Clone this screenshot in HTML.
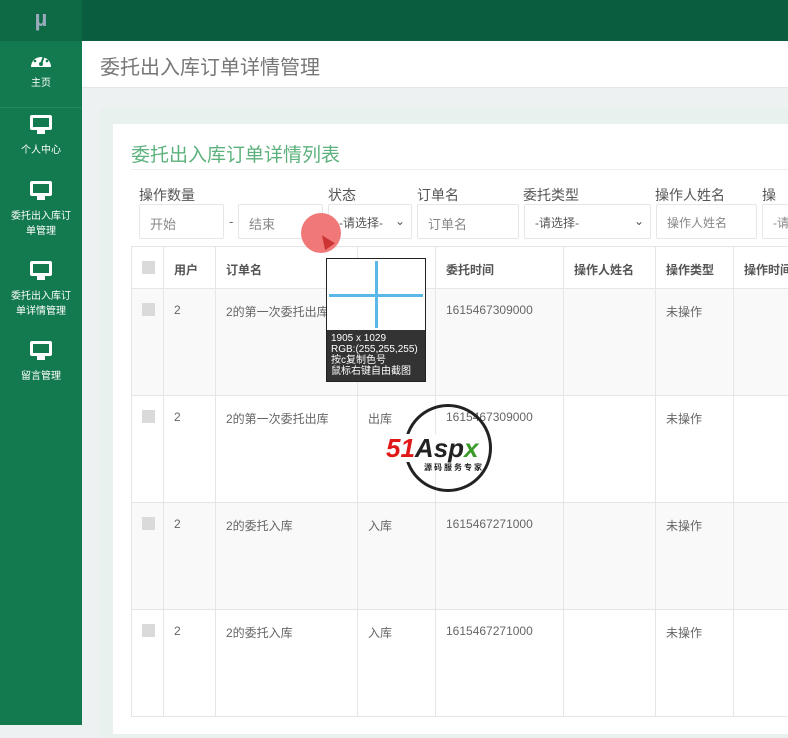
<!DOCTYPE html>
<html><head><meta charset="utf-8"><style>
*{margin:0;padding:0;box-sizing:border-box}
body{width:788px;height:725px;overflow:hidden;background:#eef1f2;font-family:"Liberation Sans","Noto Sans CJK SC",sans-serif;position:relative;color:#666}
.a{position:absolute}
#side{left:0;top:0;width:82px;height:725px;background:#137a4f}
#logo{left:0;top:0;width:82px;height:41px;background:#0d6a44;color:#9ab;font-size:22px;font-weight:bold;text-align:center;line-height:38px}
#top{left:82px;top:0;width:706px;height:41px;background:#0a5e3f}
#hdr{left:82px;top:41px;width:706px;height:47px;background:#fff;border-bottom:1px solid #e5e5e5;font-size:20px;color:#777;padding:10px 0 0 18px}
.nav{left:0;width:82px;text-align:center;color:#fff;font-size:10px;line-height:15px}
.mon{display:block;margin:0 auto 8px;width:22px;height:20px;position:relative}
.mon:before{content:"";position:absolute;left:0;top:0;width:22px;height:15px;border:3px solid #fff;border-radius:2px;box-sizing:border-box}
.mon:after{content:"";position:absolute;left:7px;top:15px;width:8px;height:4px;background:#fff}
#outer{left:100px;top:108px;width:700px;height:630px;background:#e9f1ee}
#card{left:113px;top:124px;width:690px;height:610px;background:#fff}
#title{left:131px;top:140px;font-size:19px;color:#5cb27c}
#hr{left:131px;top:169px;width:660px;height:1px;background:#eee}
.lbl{top:185px;font-size:14px;color:#555}
.inp{top:204px;height:35px;border:1px solid #e6e6e6;border-radius:2px;font-size:13px;color:#888;padding:9px 0 0 10px;background:#fff}
table{position:absolute;left:131px;top:246px;width:690px;border-collapse:collapse;font-size:12px;color:#666;table-layout:fixed}
td,th{border:1px solid #e6e6e6;vertical-align:top;text-align:left;padding:14px 10px 0;white-space:nowrap;overflow:hidden}
th{height:42px;font-weight:bold;color:#555;font-size:12px}
td{height:107px;font-size:12px}
tr.g td{background:#f9f9f9}
.cb{display:inline-block;width:13px;height:13px;background:#dadada}
</style></head><body>
<div class="a" id="side"></div>
<div class="a" id="logo">µ</div>
<div class="a" id="top"></div>
<div class="a" id="hdr">委托出入库订单详情管理</div>
<div class="a nav" style="top:50px"><svg width="22" height="20" viewBox="0 0 22 20" style="display:block;margin:0 auto 6px"><path d="M1 17 A10 10 0 1 1 21 17 Z" fill="#fff"/><circle cx="11" cy="14" r="2" fill="#137a4f"/><path d="M11 14 L14 6" stroke="#137a4f" stroke-width="2"/><circle cx="5" cy="11" r="1.3" fill="#137a4f"/><circle cx="7" cy="6" r="1.3" fill="#137a4f"/><circle cx="17" cy="11" r="1.3" fill="#137a4f"/></svg>主页</div>
<div class="a" style="left:0;top:107px;width:82px;height:1px;background:#1f8a5c"></div>
<div class="a nav" style="top:115px"><span class="mon"></span>个人中心</div>
<div class="a nav" style="top:181px"><span class="mon"></span>委托出入库订<br>单管理</div>
<div class="a nav" style="top:261px"><span class="mon"></span>委托出入库订<br>单详情管理</div>
<div class="a nav" style="top:341px"><span class="mon"></span>留言管理</div>
<div class="a" id="outer"></div>
<div class="a" id="card"></div>
<div class="a" id="title">委托出入库订单详情列表</div>
<div class="a" id="hr"></div>
<div class="a lbl" style="left:139px">操作数量</div>
<div class="a lbl" style="left:328px">状态</div>
<div class="a lbl" style="left:417px">订单名</div>
<div class="a lbl" style="left:523px">委托类型</div>
<div class="a lbl" style="left:655px">操作人姓名</div>
<div class="a lbl" style="left:762px">操作</div>
<div class="a inp" style="left:139px;width:85px">开始</div>
<div class="a" style="left:229px;top:214px;font-size:13px">-</div>
<div class="a inp" style="left:238px;width:85px">结束</div>
<div class="a inp" style="left:328px;width:84px;font-size:12px;color:#555">-请选择- <span style="position:absolute;right:6px">⌄</span></div>
<div class="a inp" style="left:417px;width:102px">订单名</div>
<div class="a inp" style="left:524px;width:127px;font-size:12px;color:#555">-请选择- <span style="position:absolute;right:6px">⌄</span></div>
<div class="a inp" style="left:656px;width:101px;font-size:12px">操作人姓名</div>
<div class="a inp" style="left:762px;width:40px;font-size:12px">-请</div>
<table>
<colgroup><col style="width:32px"><col style="width:52px"><col style="width:142px"><col style="width:78px"><col style="width:128px"><col style="width:92px"><col style="width:78px"><col style="width:88px"></colgroup>
<tr><th><span class="cb"></span></th><th>用户</th><th>订单名</th><th></th><th>委托时间</th><th>操作人姓名</th><th>操作类型</th><th>操作时间</th></tr>
<tr class="g"><td><span class="cb"></span></td><td>2</td><td>2的第一次委托出库</td><td></td><td>1615467309000</td><td></td><td>未操作</td><td></td></tr>
<tr><td><span class="cb"></span></td><td>2</td><td>2的第一次委托出库</td><td>出库</td><td>1615467309000</td><td></td><td>未操作</td><td></td></tr>
<tr class="g"><td><span class="cb"></span></td><td>2</td><td>2的委托入库</td><td>入库</td><td>1615467271000</td><td></td><td>未操作</td><td></td></tr>
<tr><td><span class="cb"></span></td><td>2</td><td>2的委托入库</td><td>入库</td><td>1615467271000</td><td></td><td>未操作</td><td></td></tr>
</table>
<div class="a" style="left:301px;top:213px;width:40px;height:40px;border-radius:50%;background:#f07878"></div>
<div class="a" style="left:320px;top:234px;width:0;height:0;border-left:6px solid transparent;border-right:6px solid transparent;border-bottom:14px solid #c33;transform:rotate(-35deg)"></div>
<div class="a" style="left:326px;top:258px;width:100px;height:124px;background:#333;border:1px solid #222">
<div style="height:71px;background:#fff;position:relative"><div class="a" style="left:48px;top:2px;width:3px;height:67px;background:#5ab7e8"></div><div class="a" style="left:2px;top:35px;width:94px;height:3px;background:#5ab7e8"></div></div>
<div style="color:#fff;font-size:10px;line-height:11px;padding:3px 0 0 4px">1905 x 1029<br>RGB:(255,255,255)<br>按c复制色号<br>鼠标右键自由截图</div></div>
<div class="a" style="left:404px;top:404px;width:88px;height:88px;border:3px solid #222;border-radius:50%"></div>
<div class="a" style="left:386px;top:434px;font-size:26px;font-weight:bold;font-style:italic;background:#fff;line-height:28px"><span style="color:#e01818">51</span><span style="color:#222">Asp</span><span style="color:#3a9a2a">x</span></div>
<div class="a" style="left:424px;top:462px;font-size:8px;color:#222;font-weight:bold;letter-spacing:2px">源码服务专家</div>
</body></html>
